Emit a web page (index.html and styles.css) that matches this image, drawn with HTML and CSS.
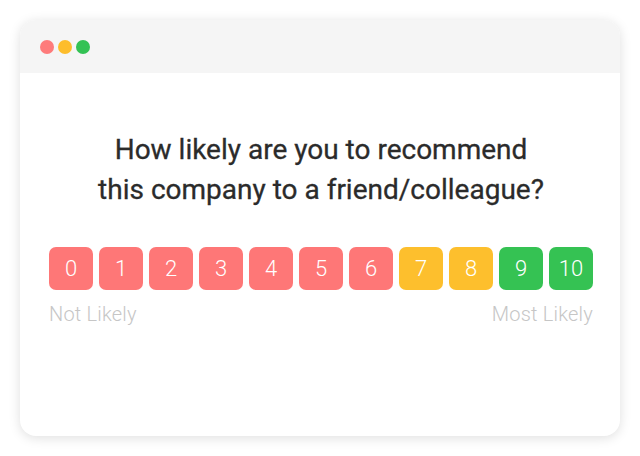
FILE: index.html
```html
<!DOCTYPE html>
<html>
<head>
<meta charset="utf-8">
<link rel="stylesheet" href="styles.css">
</head>
<body>
<div class="window">
  <div class="titlebar">
    <span class="dot red"></span><span class="dot yellow"></span><span class="dot green"></span>
  </div>
  <div class="content">
    <h1 class="question">How likely are you to recommend<br>this company to a friend/colleague?</h1>
    <div class="scale">
      <div class="btn r">0</div><div class="btn r">1</div><div class="btn r">2</div><div class="btn r">3</div><div class="btn r">4</div><div class="btn r">5</div><div class="btn r">6</div><div class="btn y">7</div><div class="btn y">8</div><div class="btn g">9</div><div class="btn g">10</div>
    </div>
    <div class="labels"><span>Not Likely</span><span>Most Likely</span></div>
  </div>
</div>
</body>
</html>
```
FILE: styles.css
```css
html, body { margin: 0; padding: 0; background: #fff; }
body { width: 640px; height: 456px; padding: 20px; box-sizing: border-box; font-family: Roboto, "Liberation Sans", sans-serif; }
.window {
  width: 600px; height: 416px; border-radius: 16px; background: #fff; overflow: hidden;
  box-shadow: 0 2px 12px rgba(0,0,0,0.13);
}
.titlebar { height: 53px; background: #f5f5f5; display: flex; align-items: center; padding-left: 20px; gap: 4px; box-sizing: border-box; }
.dot { width: 14px; height: 14px; border-radius: 50%; display: block; }
.dot.red { background: #fe7b7b; }
.dot.yellow { background: #fdbd2c; }
.dot.green { background: #33c254; }
.content { padding: 0 27px 0 29px; }
.question { margin: 57px 0 0 0; font-size: 28px; line-height: 40px; font-weight: 400; color: #2b2b2b; text-align: center; -webkit-text-stroke: 0.3px #2b2b2b; }
.scale { display: flex; gap: 6px; margin-top: 37px; }
.btn { width: 44px; height: 43px; border-radius: 7px; color: #fff; font-size: 22px; font-weight: 300; display: flex; align-items: center; justify-content: center; }
.btn.r { background: #fe7777; }
.btn.y { background: #fdbf2d; }
.btn.g { background: #35c253; }
.labels { display: flex; justify-content: space-between; margin-top: 12px; font-size: 20px; font-weight: 300; color: #c6c6c6; line-height: 24px; letter-spacing: 0.2px; }
```
